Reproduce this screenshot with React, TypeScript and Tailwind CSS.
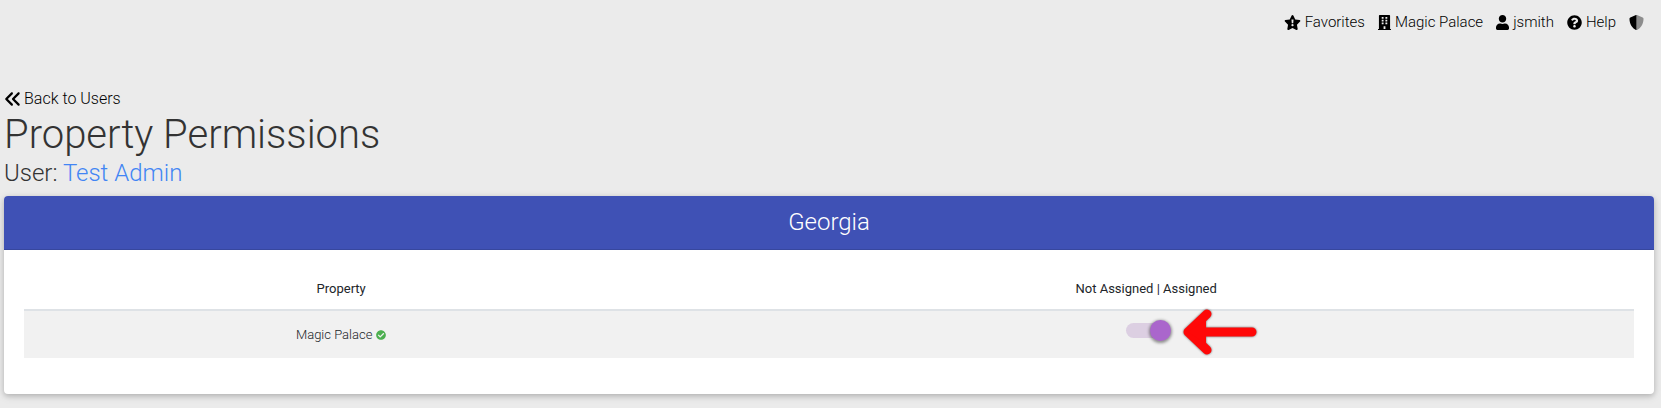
import { useState } from "react";
import {
  FaBuilding,
  FaCheckCircle,
  FaQuestionCircle,
  FaUser,
} from "react-icons/fa";
import { FaAnglesLeft } from "react-icons/fa6";

const StarIcon = () => (
  <svg viewBox="0 0 576 512" className="h-[15px] w-[17px]" fill="currentColor">
    <path
      fillRule="evenodd"
      d="M259.3 17.8L194 150.200 47.900 171.500c-26.200 3.800-36.700 36.100-17.700 54.600l105.700 103-25 145.500c-4.500 26.300 23.200 46 46.400 33.700L288 439.600l130.700 68.700c23.200 12.200 50.900-7.400 46.400-33.700l-25-145.500 105.700-103c19-18.500 8.500-50.800-17.700-54.600L382 150.200 316.700 17.800c-11.700-23.600-45.600-23.900-57.400 0zM253 150h70l-10 135h-50zM288 311a38 38 0 1 1 0 76a38 38 0 1 1 0-76z"
    />
  </svg>
);

const ShieldIcon = () => (
  <svg viewBox="0 0 512 512" className="size-[15px]" fill="currentColor">
    <path
      className="opacity-40"
      d="M256 0c6.300 0 12.500 1.300 18.500 3.700l192 80C484.500 91.100 496 108.600 496 128c0 198.500-114.500 335.700-221.500 380.300A48 48 0 0 1 256 512z"
    />
    <path d="M256 0c-6.300 0-12.500 1.300-18.500 3.700l-192 80C27.500 91.100 16 108.600 16 128c0 198.500 114.500 335.700 221.500 380.300A48 48 0 0 0 256 512z" />
  </svg>
);

const links = [
  { label: "Favorites", icon: <StarIcon /> },
  { label: "Magic Palace", icon: <FaBuilding className="h-[15px] w-[13px]" /> },
  { label: "jsmith", icon: <FaUser className="h-[15px] w-[13px]" /> },
  { label: "Help", icon: <FaQuestionCircle /> },
];

const properties = [{ id: 1, name: "Magic Palace", assigned: true }];

export default function App() {
  const [rows, setRows] = useState(properties);

  const toggle = (id: number) => {
    setRows(
      rows.map((row) =>
        row.id === id ? { ...row, assigned: !row.assigned } : row
      )
    );
  };

  return (
    <div className="min-h-screen bg-[#ebebeb] font-['Roboto',sans-serif] font-light text-[#212529]">
      <nav className="flex justify-end gap-[13px] pt-[10px] pr-[17px] text-[15px] leading-6 text-black">
        {links.map((link) => (
          <a key={link.label} href="#" className="flex items-center gap-1">
            {link.icon}
            <span>{link.label}</span>
          </a>
        ))}
        <a href="#" aria-label="Security" className="flex items-center">
          <ShieldIcon />
        </a>
      </nav>

      <main className="pt-[53px] pr-[7px] pb-3 pl-1">
        <a
          href="#"
          className="flex w-fit items-center gap-0.5 leading-6 text-black"
        >
          <FaAnglesLeft className="size-[18px]" />
          <span>Back to Users</span>
        </a>
        <h1 className="text-[40px] leading-12 text-[#333]">
          Property Permissions
        </h1>
        <h4 className="mb-2 text-2xl leading-[29px] text-[#333]">
          User:{" "}
          <a href="#" className="text-[#4285f4]">
            Test Admin
          </a>
        </h4>

        <section className="rounded bg-white shadow-[0_2px_5px_0_rgba(0,0,0,0.16),0_2px_10px_0_rgba(0,0,0,0.12)]">
          <h4 className="rounded-t border-b border-[#37479e] bg-[#3f51b5] py-3 text-center text-2xl leading-[29px] text-white">
            Georgia
          </h4>
          <div className="px-5 pt-5 pb-9">
            <table className="w-full text-center text-[13px]">
              <thead>
                <tr className="border-b-2 border-[#dee2e6]">
                  <th className="w-[39.4%] pt-[9px] pb-[10px] font-normal leading-5">
                    Property
                  </th>
                  <th className="pt-[9px] pb-[10px] font-normal leading-5">
                    Not Assigned | Assigned
                  </th>
                </tr>
              </thead>
              <tbody>
                {rows.map((row) => (
                  <tr key={row.id} className="h-12 bg-[#f1f1f1]">
                    <td className="align-middle">
                      <span className="inline-flex items-center gap-1 text-[#212529]">
                        {row.name}
                        <FaCheckCircle className="size-[10px] text-[#4caf50]" />
                      </span>
                    </td>
                    <td className="pb-2 align-middle">
                      <div className="relative inline-block align-middle">
                        <label className="flex h-[21px] w-[41px] cursor-pointer items-center">
                          <input
                            type="checkbox"
                            aria-label={`${row.name} assigned`}
                            checked={row.assigned}
                            onChange={() => toggle(row.id)}
                            className="peer sr-only"
                          />
                          <span className="h-[15px] w-10 shrink-0 rounded-full bg-[#818181] peer-checked:bg-[#dccfe2]" />
                          <span className="-ml-10 size-[21px] shrink-0 rounded-full bg-[#f1f1f1] shadow-[0_1px_3px_1px_rgba(0,0,0,0.4)] peer-checked:-ml-4 peer-checked:bg-[#aa66cc]" />
                        </label>
                        <svg
                          viewBox="0 0 76 48"
                          className="absolute -top-3 left-14 h-12 w-[76px] drop-shadow-[0_0_1px_rgba(0,0,0,0.6)]"
                          fill="none"
                          stroke="#ff0808"
                          strokeWidth="9"
                          strokeLinecap="round"
                          strokeLinejoin="round"
                        >
                          <path d="M25 6L6 24L25 42M6 24H70" />
                          <path d="M6 24L24 12V36Z" fill="#ff0808" stroke="none" />
                        </svg>
                      </div>
                    </td>
                  </tr>
                ))}
              </tbody>
            </table>
          </div>
        </section>
      </main>
    </div>
  );
}
